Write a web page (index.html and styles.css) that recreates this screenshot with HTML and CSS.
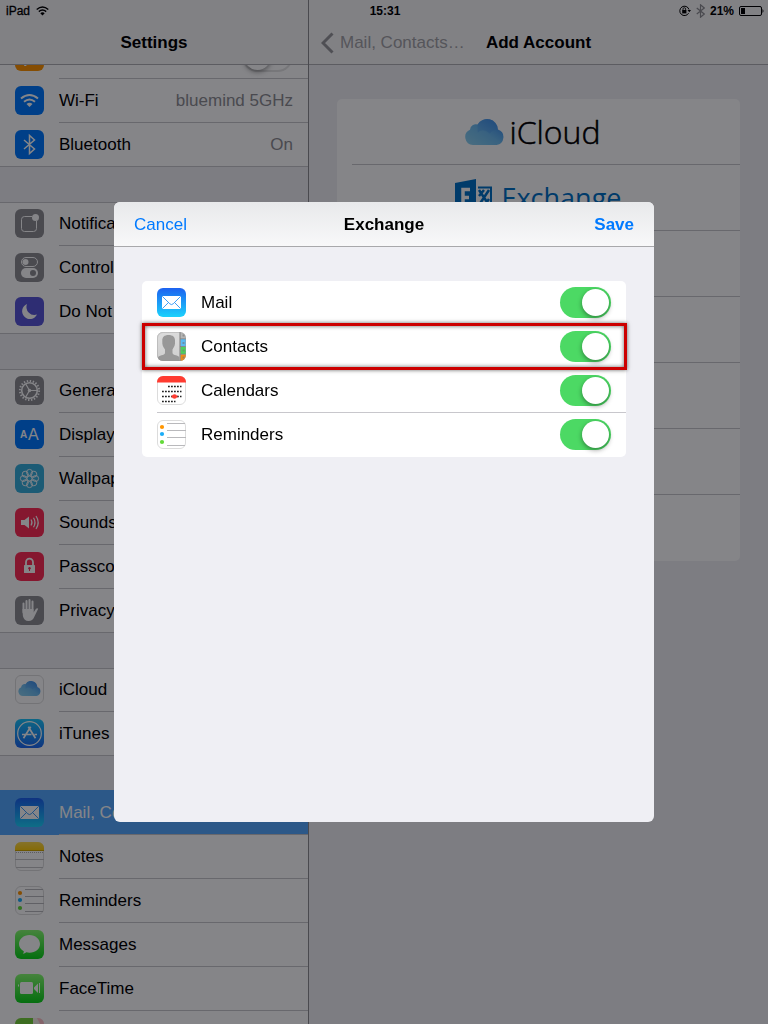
FILE: index.html
```html
<!DOCTYPE html>
<html lang="en">
<head>
<meta charset="utf-8">
<meta name="viewport" content="width=device-width, initial-scale=1">
<title>Settings</title>
<link rel="stylesheet" href="styles.css">
</head>
<body>
<svg class="sprite" aria-hidden="true">
  <defs>
    <linearGradient id="g-mail" x1="0" y1="0" x2="0" y2="1"><stop offset="0" stop-color="#1d62f0"/><stop offset="1" stop-color="#1bd2fc"/></linearGradient>
    <linearGradient id="g-store" x1="0" y1="0" x2="0" y2="1"><stop offset="0" stop-color="#1bc5fa"/><stop offset="1" stop-color="#1d68f0"/></linearGradient>
    <linearGradient id="g-green" x1="0" y1="0" x2="0" y2="1"><stop offset="0" stop-color="#87fc70"/><stop offset="1" stop-color="#0bd318"/></linearGradient>
    <linearGradient id="g-cloud" x1="0" y1="1" x2="1" y2="0"><stop offset="0" stop-color="#8fd3f0"/><stop offset=".5" stop-color="#6dbcf0"/><stop offset="1" stop-color="#2c7fe6"/></linearGradient>
    <linearGradient id="g-notes" x1="0" y1="0" x2="0" y2="1"><stop offset="0" stop-color="#ffdb4c"/><stop offset="1" stop-color="#ffcd02"/></linearGradient>
    <linearGradient id="g-card" x1="0" y1="0" x2="0" y2="1"><stop offset="0" stop-color="#dcdcdc"/><stop offset="1" stop-color="#cfcfcf"/></linearGradient>
    <clipPath id="c-round"><rect width="29" height="29" rx="6"/></clipPath>
    <symbol id="cloud" viewBox="0 0 39 26">
      <path fill="url(#g-cloud)" d="M8 26a8 8 0 0 1-3-15.300A6 6 0 0 1 12.500 5.500A11 11 0 0 1 33 10.500a8 8 0 0 1-1.500 15.500z"/>
      <path fill="#4b98ea" opacity=".35" d="M12.500 5.500A11 11 0 0 1 33 10.500q-6 0-8 4-7-6-12.300-1z"/>
    </symbol>
    <symbol id="mail" viewBox="0 0 29 29">
      <rect width="29" height="29" rx="6" fill="url(#g-mail)"/>
      <rect x="5" y="8" width="19" height="13" rx=".6" fill="#fff"/>
      <path d="M5.300 8.300l7.500 7.500q1.700 1.600 3.400 0l7.500-7.500M5.300 20.700l6-6M23.700 20.700l-6-6" fill="none" stroke="#2b93f5" stroke-width=".9"/>
    </symbol>
    <symbol id="reminders" viewBox="0 0 29 29">
      <rect x=".5" y=".5" width="28" height="28" rx="5.500" fill="#fff" stroke="#dcdcdc"/>
      <path d="M10 3.500h18M10 10.500h19M10 17.500h19M10 25.500h18" stroke="#b9b9bc"/>
      <circle cx="5" cy="7" r="2.100" fill="#ff9500"/><circle cx="5" cy="14" r="2.100" fill="#1badf8"/><circle cx="5" cy="22" r="2.100" fill="#63da38"/>
    </symbol>
    <symbol id="bluetooth" viewBox="0 0 12 18">
      <path d="M1 5l10 8-5 4.300V.700L11 5 1 13" fill="none" stroke="currentColor" stroke-width="1.600"/>
    </symbol>
  </defs>
</svg>

<div class="app">
  <div class="status">
    <span class="status-left">iPad
      <svg width="13" height="10" viewBox="0 0 13 10"><path d="M.7 3.500Q6.500-1.500 12.300 3.500M2.800 5.600Q6.500 2.500 10.200 5.600" fill="none" stroke="#000" stroke-width="1.400"/><path d="M4.300 7.200Q6.500 5.500 8.700 7.200L6.500 9.500z"/></svg>
    </span>
    <time>15:31</time>
    <span class="status-right">
      <svg width="12" height="12" viewBox="0 0 12 12"><path d="M9.600 8.200A4.700 4.700 0 1 1 10 4.500" fill="none" stroke="#000"/><path d="M8.500 5h3.500l-1.700 2.300z"/><rect x="3.200" y="5" width="4.200" height="3.400"/><path d="M4 5.200V4a1.300 1.300 0 0 1 2.600 0v1.200" fill="none" stroke="#000" stroke-width=".8"/></svg>
      <svg class="status-bt" width="9" height="14"><use href="#bluetooth"/></svg>
      <span>21%</span>
      <svg width="25" height="10" viewBox="0 0 25 10"><rect x=".5" y=".5" width="22" height="9" rx="1.500" fill="none" stroke="#000"/><rect x="2" y="2" width="4" height="6"/><path d="M23.500 3q2 2 0 4z"/></svg>
    </span>
  </div>

  <nav class="sidebar">
    <header class="bar"><h1>Settings</h1></header>
    <div class="list">
      <div class="group">
        <div class="row">
          <svg class="icon" viewBox="0 0 29 29"><rect width="29" height="29" rx="6" fill="#ff9500"/><path d="M5 13l7 0-4-8h2l7 8h5q3 1.500 0 3h-5l-6 8h-2l3-8H5z" fill="#fff"/></svg>
          <label class="row-body" for="airplane"><span>Airplane Mode</span><input class="switch" type="checkbox" id="airplane"></label>
        </div>
        <a class="row" href="#wifi">
          <svg class="icon" viewBox="0 0 29 29"><rect width="29" height="29" rx="6" fill="#007aff"/><path d="M6 12.500Q14.500 5.500 23 12.500M9 15.800Q14.500 11.300 20 15.800" fill="none" stroke="#fff" stroke-width="2"/><path d="M11.500 18Q14.500 15.700 17.500 18L14.500 21z" fill="#fff"/></svg>
          <span class="row-body"><span>Wi-Fi</span><span class="value">bluemind 5GHz</span></span>
        </a>
        <a class="row" href="#bluetooth-settings">
          <svg class="icon" viewBox="0 0 29 29"><rect width="29" height="29" rx="6" fill="#007aff"/><path d="M9 10l10.500 9-5 4.500V5.500l5 4.500L9 19" fill="none" stroke="#fff" stroke-width="1.500"/></svg>
          <span class="row-body"><span>Bluetooth</span><span class="value">On</span></span>
        </a>
      </div>

      <div class="group">
        <a class="row" href="#notifications">
          <svg class="icon" viewBox="0 0 29 29"><rect width="29" height="29" rx="6" fill="#8e8e93"/><path d="M17 7.500H9.500a3 3 0 0 0-3 3v9a3 3 0 0 0 3 3h9a3 3 0 0 0 3-3V12" fill="none" stroke="#fff"/><circle cx="20.500" cy="8.500" r="3.500" fill="#fff"/></svg>
          <span class="row-body">Notification Center</span>
        </a>
        <a class="row" href="#control">
          <svg class="icon" viewBox="0 0 29 29"><rect width="29" height="29" rx="6" fill="#8e8e93"/><rect x="6.500" y="4.500" width="16" height="9" rx="4.500" fill="none" stroke="#fff"/><circle cx="10.500" cy="9" r="3" fill="#fff"/><rect x="6" y="15" width="17" height="10" rx="5" fill="#fff"/><circle cx="18" cy="20" r="3" fill="#8e8e93"/></svg>
          <span class="row-body">Control Center</span>
        </a>
        <a class="row" href="#dnd">
          <svg class="icon" viewBox="0 0 29 29"><rect width="29" height="29" rx="6" fill="#5856d6"/><path d="M12 7A7.800 7.800 0 1 0 22 17.500A8 8 0 0 1 12 7z" fill="#fff"/></svg>
          <span class="row-body">Do Not Disturb</span>
        </a>
      </div>

      <div class="group">
        <a class="row" href="#general">
          <svg class="icon" viewBox="0 0 29 29"><rect width="29" height="29" rx="6" fill="#8e8e93"/><g fill="none" stroke="#fff"><circle cx="14.500" cy="14.500" r="9.600" stroke-width="2" stroke-dasharray="1.400 1.613"/><circle cx="14.500" cy="14.500" r="7.800" stroke-width="1.600"/><path d="M14.500 14.500h7.500M14.500 14.500l-3.700-6.400M14.500 14.500l-3.700 6.400" stroke-width="1.100"/></g><circle cx="14.500" cy="14.500" r="1.700" fill="#fff"/></svg>
          <span class="row-body">General</span>
        </a>
        <a class="row" href="#display">
          <svg class="icon" viewBox="0 0 29 29"><rect width="29" height="29" rx="6" fill="#007aff"/><text x="5" y="18" class="glyph-small">A</text><text x="13" y="20" class="glyph-large">A</text></svg>
          <span class="row-body">Display &amp; Brightness</span>
        </a>
        <a class="row" href="#wallpaper">
          <svg class="icon" viewBox="0 0 29 29"><rect width="29" height="29" rx="6" fill="#36aedb"/><g fill="none" stroke="#fff" stroke-width=".9"><circle cx="14.500" cy="14.500" r="2.500"/><circle cx="14.500" cy="8.400" r="3"/><circle cx="18.800" cy="10.200" r="3"/><circle cx="20.600" cy="14.500" r="3"/><circle cx="18.800" cy="18.800" r="3"/><circle cx="14.500" cy="20.600" r="3"/><circle cx="10.200" cy="18.800" r="3"/><circle cx="8.400" cy="14.500" r="3"/><circle cx="10.200" cy="10.200" r="3"/></g></svg>
          <span class="row-body">Wallpaper</span>
        </a>
        <a class="row" href="#sounds">
          <svg class="icon" viewBox="0 0 29 29"><rect width="29" height="29" rx="6" fill="#ff2d55"/><path d="M6 12h3.500L14 8.500v12L9.500 17H6z" fill="#fff"/><path d="M16 11.500q2 3 0 6M18.500 9.800q3 4.700 0 9.400M21 8q4.400 6.500 0 13" fill="none" stroke="#fff" stroke-width="1.200"/></svg>
          <span class="row-body">Sounds</span>
        </a>
        <a class="row" href="#passcode">
          <svg class="icon" viewBox="0 0 29 29"><rect width="29" height="29" rx="6" fill="#ff2d55"/><rect x="9" y="13" width="11" height="8" rx=".5" fill="#fff"/><path d="M11 13.500v-3.300a3.500 3.500 0 0 1 7 0v3.300" fill="none" stroke="#fff" stroke-width="1.800"/><circle cx="14.500" cy="16.300" r="1.200" fill="#ff2d55"/><path d="M14.500 16v3" stroke="#ff2d55"/></svg>
          <span class="row-body">Passcode</span>
        </a>
        <a class="row" href="#privacy">
          <svg class="icon" viewBox="0 0 29 29"><rect width="29" height="29" rx="6" fill="#8e8e93"/><path d="M8.500 7.500v9M11.500 5v10M14.500 4v11M17.500 5.500v10" stroke="#fff" stroke-width="2" stroke-linecap="round"/><path d="M7.500 13h11v3.500l2.500-3.700q1.200-1.100 2.200-.1l-4 8.300q-1.500 4-5.700 4-4.500 0-5.600-5z" fill="#fff"/></svg>
          <span class="row-body">Privacy</span>
        </a>
      </div>

      <div class="group">
        <a class="row" href="#icloud">
          <svg class="icon" viewBox="0 0 29 29"><rect x=".5" y=".5" width="28" height="28" rx="5.500" fill="#fff" stroke="#dcdcdc"/><use href="#cloud" x="3" y="6" width="23" height="15"/></svg>
          <span class="row-body">iCloud</span>
        </a>
        <a class="row" href="#store">
          <svg class="icon" viewBox="0 0 29 29"><rect width="29" height="29" rx="6" fill="url(#g-store)"/><g fill="none" stroke="#fff"><circle cx="14.500" cy="14.500" r="11.800" stroke-width="1.200"/><path d="M13.300 7.800l7.200 11.500M15.700 7.800L8.500 19.300M7 15.500h9.500M19.500 15.500H22" stroke-width="1.700"/></g></svg>
          <span class="row-body">iTunes &amp; App Store</span>
        </a>
      </div>

      <div class="group">
        <a class="row selected" href="#accounts" aria-current="page">
          <svg class="icon"><use href="#mail"/></svg>
          <span class="row-body">Mail, Contacts, Calendars</span>
        </a>
        <a class="row" href="#notes">
          <svg class="icon" viewBox="0 0 29 29"><rect x=".5" y=".5" width="28" height="28" rx="5.500" fill="#fff" stroke="#dcdcdc"/><path d="M0 9V6a6 6 0 0 1 6-6h17a6 6 0 0 1 6 6v3z" fill="url(#g-notes)"/><path d="M0 8.500h29" stroke="#d1a800"/><path d="M1 10.500h28" stroke="#b0b0b0" stroke-dasharray="1 1"/><path d="M0 17.500h29M1 25.500h27" stroke="#c4c4c6"/></svg>
          <span class="row-body">Notes</span>
        </a>
        <a class="row" href="#reminders-settings">
          <svg class="icon"><use href="#reminders"/></svg>
          <span class="row-body">Reminders</span>
        </a>
        <a class="row" href="#messages">
          <svg class="icon" viewBox="0 0 29 29"><rect width="29" height="29" rx="6" fill="url(#g-green)"/><path d="M14.500 5C20.500 5 25 9 25 14s-4.500 8.700-10.500 8.700q-1.700 0-3.200-.4-1.300 1.300-3.500 1.500 1.200-1.200 1-2.600Q4 18.500 4 14C4 9 8.500 5 14.500 5z" fill="#fff"/></svg>
          <span class="row-body">Messages</span>
        </a>
        <a class="row" href="#facetime">
          <svg class="icon" viewBox="0 0 29 29"><rect width="29" height="29" rx="6" fill="url(#g-green)"/><rect x="5" y="8" width="13" height="12" rx="1.500" fill="#fff"/><path d="M19 13.500l4-4v9.500l-4-4zM24 9h1v10h-1zM3 10.500h1v2H3z" fill="#fff"/></svg>
          <span class="row-body">FaceTime</span>
        </a>
        <a class="row" href="#maps" aria-label="Maps">
          <svg class="icon" viewBox="0 0 29 29"><g clip-path="url(#c-round)"><path fill="#f5f0e6" d="M0 0h29v29H0z"/><path fill="#76d13a" d="M0 0h18v12H0z"/><path fill="#ffc0c8" d="M22 0h7v14z"/><path fill="#fed64a" d="M0 14l29 5v5L0 19z"/></g></svg>
          <span class="row-body"></span>
        </a>
      </div>
    </div>
  </nav>

  <main class="detail">
    <header class="bar detail-bar">
      <a class="back" href="#accounts"><svg width="13" height="22" viewBox="0 0 13 22"><path d="M11.500 1.500L2 11l9.500 9.500" fill="none" stroke="currentColor" stroke-width="3"/></svg>Mail, Contacts…</a>
      <h2>Add Account</h2>
    </header>
    <ul class="providers">
      <li><a class="provider icloud" href="#add-icloud"><svg width="39" height="26"><use href="#cloud"/></svg>iCloud</a></li>
      <li><a class="provider exchange" href="#add-exchange"><svg width="38" height="38" viewBox="0 0 38 38"><path fill="#0072c6" d="M0 4L21 0v38L0 34z"/><path d="M15 10.500H8V27h7M8 18.500h6" fill="none" stroke="#fff" stroke-width="3.500"/><path d="M23 8.500h13v21H23" fill="#fff" stroke="#0072c6" stroke-width="2"/><path d="M24 11l10 15M34 11L24 26M24 17l5-6M34 20l-5 7" stroke="#0072c6" stroke-width="2.500"/></svg>Exchange</a></li>
      <li></li><li></li><li></li><li></li><li></li>
    </ul>
  </main>
</div>

<div class="scrim">
  <form class="dialog" role="dialog" aria-modal="true" aria-labelledby="dialog-title">
    <header class="dialog-bar">
      <button type="button">Cancel</button>
      <h2 id="dialog-title">Exchange</h2>
      <button type="submit" class="save">Save</button>
    </header>
    <div class="options">
      <div class="row">
        <svg class="icon"><use href="#mail"/></svg>
        <label class="row-body" for="opt-mail">Mail<input class="switch" type="checkbox" id="opt-mail" checked></label>
      </div>
      <div class="row highlighted">
        <svg class="icon" viewBox="0 0 29 29"><g clip-path="url(#c-round)"><path fill="#b5b5b5" d="M0 0h29v29H0z"/><path fill="url(#g-card)" d="M0 0h23v29H0z"/><path fill="#59b9f2" d="M23.500 7H29v7.200h-5.500z"/><path fill="#4cd15c" d="M23.500 15H29v7h-5.500z"/><path fill="#f28c13" d="M23.500 22.500H29V29h-5.500z"/><path fill="#7d7d7d" d="M22.500 0h1v29h-1zM23 6.500h6v.8h-6zM23 14.200h6v.8h-6zM23 21.700h6v.8h-6z"/><path d="M26.500 2.500v2M26.500 10v2M26.500 17.500v2M26.500 24.500v2" stroke="#777" stroke-opacity=".6" stroke-width="2"/><path fill="#989898" d="M11.500 3c4.300 0 6.800 2 6.500 6 .5 3.500-.8 6-2.500 8.500v3.500c0 2.500 7 2 7 5v3H1v-3c0-3 7-2.500 7-5v-3.500C6 15 5 12.500 5.300 9 5 5 7.500 3 11.500 3z"/></g><rect x=".5" y=".5" width="28" height="28" rx="5.500" fill="none" stroke="#999" stroke-opacity=".4"/></svg>
        <label class="row-body" for="opt-contacts">Contacts<input class="switch" type="checkbox" id="opt-contacts" checked></label>
      </div>
      <div class="row">
        <svg class="icon" viewBox="0 0 29 29"><rect x=".5" y=".5" width="28" height="28" rx="5.500" fill="#fff" stroke="#dcdcdc"/><path d="M0 6.500V6a6 6 0 0 1 6-6h17a6 6 0 0 1 6 6v.5z" fill="#ff3b30"/><g stroke="#222" stroke-width="1.700" stroke-dasharray="1.800 1.200"><path d="M11 10.500h13.500M5 15.500h19.500M5 20.500h19.500M5 25.500h13.500"/></g><path d="M14.500 20.500h6" stroke="#ff3b30" stroke-width="2"/><circle cx="17.500" cy="20.500" r="2.300" fill="#ff3b30"/></svg>
        <label class="row-body" for="opt-calendars">Calendars<input class="switch" type="checkbox" id="opt-calendars" checked></label>
      </div>
      <div class="row">
        <svg class="icon"><use href="#reminders"/></svg>
        <label class="row-body" for="opt-reminders">Reminders<input class="switch" type="checkbox" id="opt-reminders" checked></label>
      </div>
    </div>
  </form>
</div>
</body>
</html>
```
FILE: styles.css
```css
* {
  box-sizing: border-box;
}

body {
  margin: 0;
  overflow: hidden;
  font: 17px/20px "Liberation Sans", Arial, sans-serif;
  color: #000;
}

h1,
h2 {
  margin: 0;
  font-size: 17px;
  line-height: 20px;
  font-weight: bold;
}

a {
  color: inherit;
  text-decoration: none;
}

.sprite {
  position: absolute;
  width: 0;
  height: 0;
}

.app {
  display: grid;
  grid-template-columns: 309px 1fr;
  grid-template-rows: 20px 1fr;
  height: 100vh;
  overflow: hidden;
}

/* Status bar lies over the top of both panes */
.status {
  grid-area: 1 / 1 / 2 / 3;
  z-index: 2;
  display: grid;
  grid-template-columns: 1fr auto 1fr;
  align-items: center;
  padding: 2px 4px 0 6px;
  font-size: 12px;
  line-height: 18px;
  font-weight: bold;
}

.status-left,
.status-right {
  display: flex;
  align-items: center;
  gap: 6px;
}

.status-left {
  font-weight: normal;
  -webkit-text-stroke: 0.3px #000;
}

.status-right {
  justify-content: flex-end;
  gap: 5px;
}

.status-bt {
  color: #8e8e93;
}

.sidebar,
.detail {
  grid-row: 1 / 3;
  min-width: 0;
  min-height: 0;
  overflow: hidden;
  background: #efeff4;
}

.sidebar {
  grid-column: 1;
  border-right: 1px solid #8e8e93;
}

.detail {
  grid-column: 2;
}

.bar {
  position: relative;
  z-index: 1;
  display: grid;
  align-items: center;
  justify-items: center;
  height: 65px;
  padding-top: 22px;
  background: #f8f8f8;
  border-bottom: 1px solid #b0b0b4;
}

/* The list is scrolled part of a row up under the bar */
.list {
  margin-top: -30px;
}

.group {
  background: #fff;
  box-shadow: inset 0 1px #c8c7cc, inset 0 -1px #c8c7cc;
}

.group + .group {
  margin-top: 35px;
}

.row {
  display: flex;
  align-items: center;
  gap: 15px;
  height: 44px;
  padding-left: 15px;
}

.icon {
  flex: none;
  width: 29px;
  height: 29px;
  margin-bottom: 1px;
}

.row-body {
  flex: 1;
  display: flex;
  align-items: center;
  justify-content: space-between;
  height: 44px;
  padding-right: 15px;
  white-space: nowrap;
  border-bottom: 1px solid #c8c7cc;
}

.row:last-child .row-body {
  border-color: transparent;
}

.value {
  color: #8e8e93;
}

.selected {
  color: #fff;
  background: #55aaff;
  box-shadow: 0 -1px #55aaff;
}

.glyph-small,
.glyph-large {
  fill: #fff;
  font-family: "Liberation Sans", Arial, sans-serif;
}

.glyph-small {
  font-size: 10px;
  font-weight: bold;
}

.glyph-large {
  font-size: 16px;
}

.switch {
  appearance: none;
  flex: none;
  display: flex;
  align-items: center;
  width: 51px;
  height: 31px;
  margin: 0;
  padding: 2px;
  border-radius: 16px;
  background: #fff;
  box-shadow: inset 0 0 0 2px #e5e5e5;
}

.switch::before {
  content: "";
  width: 27px;
  height: 27px;
  border-radius: 50%;
  background: #fff;
  box-shadow: 0 2px 5px rgba(0, 0, 0, 0.4);
}

.switch:checked {
  justify-content: flex-end;
  background: #4cd964;
  box-shadow: none;
}

.detail-bar {
  grid-template-columns: 1fr auto 1fr;
  padding-left: 12px;
  padding-right: 12px;
}

.back {
  justify-self: start;
  display: flex;
  align-items: center;
  gap: 6px;
  color: #a4a4a8;
}

.back svg {
  color: #98989c;
}

.providers {
  list-style: none;
  margin: 34px 28px;
  padding: 0 0 0 15px;
  border-radius: 5px;
  background: #fff;
}

.providers li {
  height: 66px;
  border-bottom: 1px solid #c8c7cc;
}

.providers li:last-child {
  border-color: transparent;
}

.provider {
  display: flex;
  align-items: center;
  justify-content: center;
  height: 65px;
  padding-right: 15px;
  font-family: "Open Sans", "Noto Sans", sans-serif;
}

.icloud {
  gap: 5px;
  padding-right: 26px;
  font-size: 32px;
  font-weight: 300;
  -webkit-text-stroke: 0.5px #000;
}

.exchange {
  gap: 8px;
  font-size: 27px;
  color: #0072c6;
}

.scrim {
  position: fixed;
  inset: 0;
  z-index: 10;
  display: flex;
  align-items: center;
  justify-content: center;
  background: rgba(0, 1, 6, 0.48);
}

.dialog {
  width: 540px;
  max-width: 100%;
  min-height: 620px;
  border-radius: 6px;
  overflow: hidden;
  background: #efeff4;
}

.dialog-bar {
  display: grid;
  grid-template-columns: 1fr auto 1fr;
  align-items: center;
  height: 45px;
  padding: 1px 20px 0;
  background: linear-gradient(#e8e9eb, #f8f8f9);
  border-bottom: 1px solid #a8a8ab;
}

.dialog-bar button {
  justify-self: start;
  padding: 0;
  border: 0;
  background: none;
  font: inherit;
  color: #007aff;
}

.dialog-bar .save {
  justify-self: end;
  font-weight: bold;
}

.options {
  margin: 34px 28px;
  border-radius: 5px;
  background: #fff;
}

.options .row {
  position: relative;
  background: linear-gradient(#c8c7cc, #c8c7cc) 15px 100% / 100% 1px no-repeat;
}

.options .row:last-child {
  background: none;
}

.options .row-body {
  border-color: transparent;
}

.highlighted::after {
  content: "";
  position: absolute;
  inset: -2px -1px -1px 0;
  border: 3px solid #cc0000;
  box-shadow: 0 0 4px rgba(0, 0, 0, 0.6), inset 0 0 4px rgba(0, 0, 0, 0.6);
  pointer-events: none;
}
```
